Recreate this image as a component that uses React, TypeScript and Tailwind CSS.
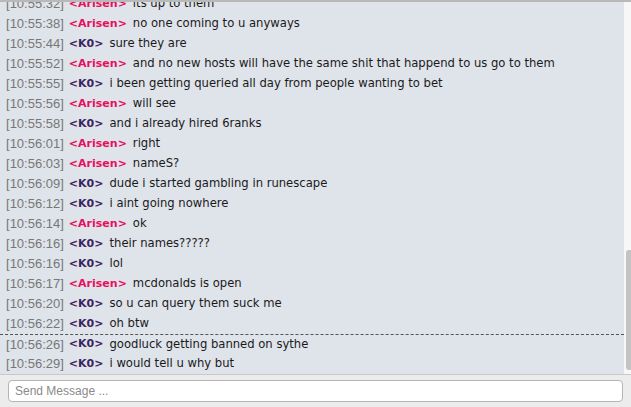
const messages = [
  { time: "10:55:32", nick: "Arisen", text: "its up to them" },
  { time: "10:55:38", nick: "Arisen", text: "no one coming to u anyways" },
  { time: "10:55:44", nick: "K0", text: "sure they are" },
  { time: "10:55:52", nick: "Arisen", text: "and no new hosts will have the same shit that happend to us go to them" },
  { time: "10:55:55", nick: "K0", text: "i been getting queried all day from people wanting to bet" },
  { time: "10:55:56", nick: "Arisen", text: "will see" },
  { time: "10:55:58", nick: "K0", text: "and i already hired 6ranks" },
  { time: "10:56:01", nick: "Arisen", text: "right" },
  { time: "10:56:03", nick: "Arisen", text: "nameS?" },
  { time: "10:56:09", nick: "K0", text: "dude i started gambling in runescape" },
  { time: "10:56:12", nick: "K0", text: "i aint going nowhere" },
  { time: "10:56:14", nick: "Arisen", text: "ok" },
  { time: "10:56:16", nick: "K0", text: "their names?????" },
  { time: "10:56:16", nick: "K0", text: "lol" },
  { time: "10:56:17", nick: "Arisen", text: "mcdonalds is open" },
  { time: "10:56:20", nick: "K0", text: "so u can query them suck me" },
  { time: "10:56:22", nick: "K0", text: "oh btw" },
  { time: "10:56:26", nick: "K0", text: "goodluck getting banned on sythe", marker: true },
  { time: "10:56:29", nick: "K0", text: "i would tell u why but" },
]

export default function App() {
  return (
    <div className="flex h-[407px] w-[631px] flex-col overflow-hidden bg-[#ececec] font-['DejaVu_Sans',sans-serif]">
      <div className="flex h-[374px] border-t-2 border-[#b9b9b9]">
        {/* log */}
        <div className="flex w-[624px] flex-col justify-end overflow-hidden bg-[#dfe3ea]">
          {messages.map((m, i) => (
            <div
              key={i}
              className={`flex h-[20px] shrink-0 items-center whitespace-nowrap pl-[6px] ${
                m.marker ? "border-t border-dashed border-[#555]" : ""
              }`}
            >
              <span className="font-['Liberation_Sans',sans-serif] text-[13px] text-[#777]">
                [{m.time}]
              </span>
              <span
                className={`ml-[5px] text-[11px] font-bold ${m.nick === "K0" ? "text-[#3b2560]" : "text-[#e6105e]"}`}
              >
                &lt;{m.nick}&gt;
              </span>
              <span className="ml-[6px] text-[11.6px] text-[#1a1a1a]">{m.text}</span>
            </div>
          ))}
        </div>
        {/* scrollbar */}
        <div className="flex w-[7px] flex-col bg-[#f7f7f7] pl-[2px]">
          <div className="mt-[248px] h-[120px] rounded-l-[3px] bg-[#c3c3c3]" />
        </div>
      </div>
      <div className="flex flex-1 items-center border-t border-[#c8c8c8] px-[8px]">
        <input
          placeholder="Send Message ..."
          className="h-[22px] w-full rounded-[4px] border border-[#b5b5b5] bg-white px-[6px] font-['Liberation_Sans',sans-serif] text-[12px] text-[#333] outline-none placeholder:text-[#8a8a8a]"
        />
      </div>
    </div>
  )
}
